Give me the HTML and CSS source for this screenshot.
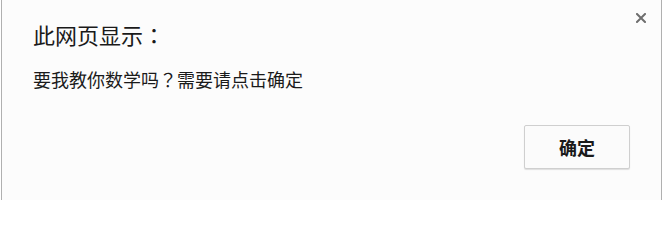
FILE: index.html
```html
<!DOCTYPE html>
<html>
<head>
<meta charset="utf-8">
<link rel="stylesheet" href="styles.css">
</head>
<body>
<div class="dialog">
  <div class="close" aria-label="关闭">
    <svg width="10" height="10" viewBox="0 0 10 10"><path d="M1 1L9 9M9 1L1 9" stroke="#6e6e6e" stroke-width="2" stroke-linecap="square"/></svg>
  </div>
  <div class="title">此网页显示<span class="punct">：</span></div>
  <div class="message">要我教你数学吗<span class="punct">？</span>需要请点击确定</div>
  <div class="actions">
    <button class="ok">确定</button>
  </div>
</div>
</body>
</html>
```
FILE: styles.css
```css
html, body {
  margin: 0;
  padding: 0;
  background: #ffffff;
  height: 200px;
  overflow: hidden;
}
body {
  padding-left: 1px;
  font-family: "Noto Sans CJK SC", "Microsoft YaHei", sans-serif;
}
.dialog {
  position: relative;
  width: 661px;
  height: 200px;
  box-sizing: border-box;
  background: #fcfcfc;
  border-left: 1px solid #b0b0b0;
  border-right: 1px solid #b0b0b0;
  padding: 19px 0 0 31px;
  color: #1a1a1a;
}
.close {
  position: absolute;
  top: 13px;
  right: 15px;
  width: 10px;
  height: 10px;
  display: flex;
}
.title {
  font-size: 22px;
  line-height: 30px;
}
.message {
  margin-top: 18px;
  font-size: 18px;
  line-height: 24px;
}
.punct {
  font-family: "Noto Sans CJK TC", sans-serif;
}
.actions {
  display: flex;
  justify-content: flex-end;
  padding-right: 31px;
  margin-top: 34px;
}
.ok {
  width: 106px;
  height: 44px;
  border: 1px solid #cfcfcf;
  border-radius: 2px;
  background: #fbfbfb;
  box-shadow: 0 1px 1px rgba(0,0,0,0.12);
  font-family: "Noto Sans CJK SC", "Microsoft YaHei", sans-serif;
  font-size: 18px;
  font-weight: bold;
  color: #1a1a1a;
  padding: 0;
}
```
